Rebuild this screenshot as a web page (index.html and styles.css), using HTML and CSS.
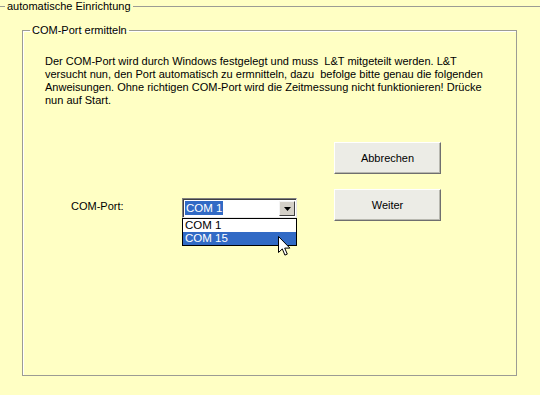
FILE: index.html
```html
<!DOCTYPE html>
<html lang="de">
<head>
    <meta charset="UTF-8">
    <title>automatische Einrichtung</title>
    <link rel="stylesheet" href="styles.css">
</head>
<body>
    <fieldset class="outer-group">
        <legend class="group-title">automatische Einrichtung</legend>

        <fieldset class="inner-group">
            <legend class="group-title">COM-Port ermitteln</legend>

            <p class="info-text">
                Der COM-Port wird durch Windows festgelegt und muss &nbsp;L&amp;T mitgeteilt werden. L&amp;T<br>
                versucht nun, den Port automatisch zu ermnitteln, dazu &nbsp;befolge bitte genau die folgenden<br>
                Anweisungen. Ohne richtigen COM-Port wird die Zeitmessung nicht funktionieren! Drücke<br>
                nun auf Start.
            </p>

            <div class="form-grid">
                <button class="win-button btn-cancel">Abbrechen</button>

                <span class="port-label">COM-Port:</span>
                <div class="combo">
                    <div class="combo-field">
                        <span class="combo-value">COM 1</span>
                        <span class="combo-arrow">
                            <svg width="7" height="4" viewBox="0 0 7 4"><path d="M0 0h7L3.5 4z" fill="#000"/></svg>
                        </span>
                    </div>
                    <ul class="combo-list">
                        <li class="combo-item">COM 1</li>
                        <li class="combo-item selected">COM 15</li>
                    </ul>
                    <svg class="mouse-cursor" width="13" height="21" viewBox="0 0 13 21">
                        <path d="M0.5 0.5v16l3.8-3.6 2.6 6.2 2.4-1-2.6-6h5.2z" fill="#fff" stroke="#000" stroke-width="1"/>
                    </svg>
                </div>
                <button class="win-button btn-next">Weiter</button>
            </div>
        </fieldset>
    </fieldset>
</body>
</html>
```

FILE: styles.css
```css
body {
    margin: 0;
    background: #ffffc4;
    color: #000;
    font-family: "Liberation Sans", Arial, sans-serif;
    font-size: 11px;
    height: 395px;
    overflow: hidden;
}

/* outer group box runs past the window, only its top line shows */
.outer-group {
    margin: 0;
    padding: 0 0 0 5px;
    border: none;
    border-top: 1px solid #9c9c94;
    min-width: 0;
}

.group-title {
    padding: 0 2px;
    line-height: 13px;
    font-size: 11px;
}

.inner-group {
    margin: 11px 0 0 17px;
    padding: 0 0 0 7px;
    width: 495px;
    height: 352px;
    box-sizing: border-box;
    border: 1px solid #9c9c94;
    box-shadow: inset 1px 1px 0 #fff;
}

.info-text {
    margin: 18px 0 0 15px;
    line-height: 13px;
    white-space: nowrap;
}

.form-grid {
    display: grid;
    grid-template-columns: 111px 152px 107px;
    grid-template-rows: 47px 32px;
    margin: 35px 0 0 41px;
}

.win-button {
    width: 107px;
    height: 32px;
    padding: 0;
    font-family: "Liberation Sans", Arial, sans-serif;
    font-size: 11px;
    color: #000;
    background: #ecece6;
    border: 1px solid;
    border-color: #fff #6f6f6f #6f6f6f #fff;
    box-shadow: inset -1px -1px 0 #b8b8b0;
}

.btn-cancel {
    grid-column: 3;
    grid-row: 1;
}

.btn-next {
    grid-column: 3;
    grid-row: 2;
}

.port-label {
    grid-column: 1;
    grid-row: 2;
    margin-top: 11px;
}

.combo {
    grid-column: 2;
    grid-row: 2;
    position: relative;
    margin-top: 9px;
    width: 115px;
}

.combo-field {
    display: flex;
    align-items: center;
    justify-content: space-between;
    height: 20px;
    box-sizing: border-box;
    padding: 0 1px 0 1px;
    border: 1px solid #808080;
    border-right-color: #e8e8e8;
    border-bottom-color: #e8e8e8;
    box-shadow: inset 1px 1px 0 #404040;
    background: #fff;
}

.combo-value {
    margin-left: 1px;
    padding: 0 1px;
    line-height: 14px;
    font-size: 11.5px;
    color: #fff;
    background: #316ac5;
}

.combo-arrow {
    display: flex;
    align-items: center;
    justify-content: center;
    width: 16px;
    height: 15px;
    margin-top: 1px;
    background: #d4d0c8;
    border: 1px solid;
    border-color: #f4f4f4 #404040 #404040 #f4f4f4;
    box-sizing: border-box;
}

.combo-list {
    position: absolute;
    top: 20px;
    left: 0;
    width: 115px;
    box-sizing: border-box;
    margin: 0;
    padding: 0;
    list-style: none;
    background: #fff;
    border: 1px solid #000;
}

.combo-item {
    height: 13px;
    line-height: 13px;
    padding-left: 2px;
    font-size: 11.5px;
}

.combo-item.selected {
    background: #316ac5;
    color: #fff;
}

.mouse-cursor {
    position: absolute;
    left: 96px;
    top: 38px;
}
```
